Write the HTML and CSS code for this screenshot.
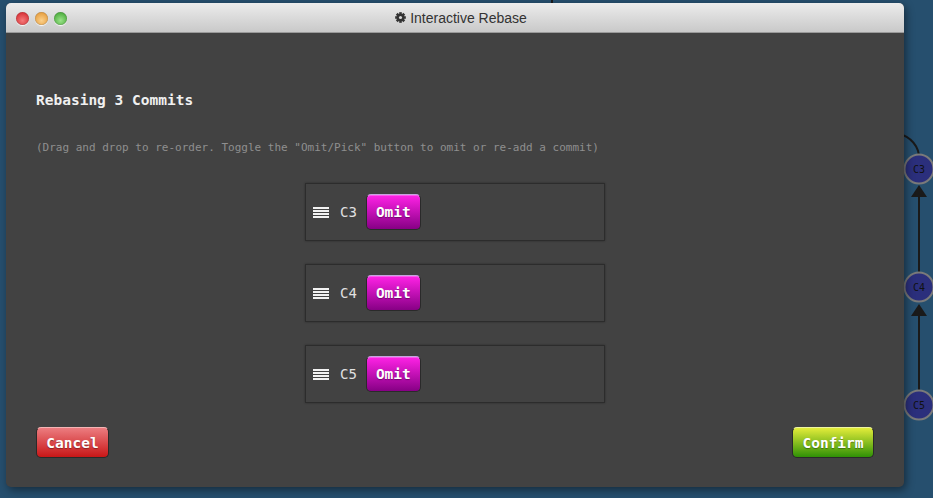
FILE: index.html
```html
<!DOCTYPE html>
<html>
<head>
<meta charset="utf-8">
<link rel="stylesheet" href="styles.css">
</head>
<body>
<svg class="graph" width="933" height="498" viewBox="0 0 933 498">
  <line x1="552" y1="0" x2="552" y2="4" stroke="#1a1a1a" stroke-width="2"/>
  <path d="M890 131 Q916 136 919 155" fill="none" stroke="#1a1a1a" stroke-width="2"/>
  <line x1="919" y1="196" x2="919" y2="273" stroke="#1a1a1a" stroke-width="2"/>
  <polygon points="919,185 911,197 927,197" fill="#1a1a1a"/>
  <line x1="919" y1="314" x2="919" y2="391" stroke="#1a1a1a" stroke-width="2"/>
  <polygon points="919,304 911,316 927,316" fill="#1a1a1a"/>
  <g class="node"><circle cx="919" cy="169" r="14.5"/><text x="919" y="173">C3</text></g>
  <g class="node"><circle cx="919" cy="287" r="14.5"/><text x="919" y="291">C4</text></g>
  <g class="node"><circle cx="919" cy="405" r="14.5"/><text x="919" y="409">C5</text></g>
</svg>
<div class="window">
  <div class="titlebar">
    <div class="lights">
      <span class="light red"></span>
      <span class="light yellow"></span>
      <span class="light green"></span>
    </div>
    <div class="title">
      <svg class="gear" width="11" height="11" viewBox="-6 -6 12 12">
        <g fill="#333">
          <circle r="4.1"/>
          <rect x="-1.4" y="-5.8" width="2.8" height="11.6"/>
          <rect x="-1.4" y="-5.8" width="2.8" height="11.6" transform="rotate(45)"/>
          <rect x="-1.4" y="-5.8" width="2.8" height="11.6" transform="rotate(90)"/>
          <rect x="-1.4" y="-5.8" width="2.8" height="11.6" transform="rotate(135)"/>
        </g>
        <circle r="1.7" fill="#d8d8d8"/>
      </svg>
      <span>Interactive Rebase</span>
    </div>
  </div>
  <div class="content">
    <h2 class="heading">Rebasing 3 Commits</h2>
    <p class="hint">(Drag and drop to re-order. Toggle the "Omit/Pick" button to omit or re-add a commit)</p>
    <ul class="commits">
      <li class="commit"><span class="grip"><i></i><i></i><i></i><i></i></span><span class="name">C3</span><button class="btn omit">Omit</button></li>
      <li class="commit"><span class="grip"><i></i><i></i><i></i><i></i></span><span class="name">C4</span><button class="btn omit">Omit</button></li>
      <li class="commit"><span class="grip"><i></i><i></i><i></i><i></i></span><span class="name">C5</span><button class="btn omit">Omit</button></li>
    </ul>
    <div class="actions">
      <button class="btn cancel">Cancel</button>
      <button class="btn confirm">Confirm</button>
    </div>
  </div>
</div>
</body>
</html>
```
FILE: styles.css
```css
html, body {
  margin: 0;
  padding: 0;
}
body {
  width: 933px;
  height: 498px;
  background: #264f6e;
  overflow: hidden;
  position: relative;
  font-family: "DejaVu Sans Mono", "Liberation Mono", monospace;
}
.graph {
  position: absolute;
  left: 0;
  top: 0;
}
.node circle {
  fill: #2b2f7c;
  stroke: #7a7a7a;
  stroke-width: 2;
}
.node text {
  font-family: "DejaVu Sans Mono", monospace;
  font-size: 10px;
  fill: #111;
  text-anchor: middle;
}
.window {
  position: relative;
  margin: 3px 0 0 6px;
  width: 898px;
  height: 484px;
  background: #424242;
  border-radius: 5px;
  box-shadow: 2px 3px 8px rgba(0, 0, 0, 0.45);
  display: flex;
  flex-direction: column;
  overflow: hidden;
}
.titlebar {
  height: 30px;
  flex: none;
  background: linear-gradient(#ececec, #c9c9c9);
  border-bottom: 1px solid #9a9a9a;
  box-sizing: border-box;
  display: flex;
  align-items: center;
  position: relative;
}
.lights {
  display: flex;
  gap: 6px;
  padding-left: 10px;
  padding-top: 2px;
}
.light {
  width: 13px;
  height: 13px;
  border-radius: 50%;
  box-shadow: 0 1px 1px rgba(255,255,255,0.9), inset 0 0 1px rgba(0,0,0,0.5);
}
.light.red { background: radial-gradient(circle at 50% 65%, #f47a7a, #d9363b 70%); }
.light.yellow { background: radial-gradient(circle at 50% 65%, #fbd08a, #e8a245 70%); }
.light.green { background: radial-gradient(circle at 50% 65%, #9be38a, #52b043 70%); }
.title {
  position: absolute;
  left: 0;
  right: 0;
  top: 0;
  bottom: 0;
  display: flex;
  align-items: center;
  justify-content: center;
  gap: 4px;
  font-family: "Liberation Sans", Arial, sans-serif;
  font-size: 14px;
  color: #333;
  padding-left: 12px;
}
.content {
  flex: 1;
  padding: 58px 30px 0 30px;
  display: flex;
  flex-direction: column;
}
.heading {
  margin: 0;
  font-size: 14.5px;
  line-height: 18px;
  font-weight: bold;
  color: #f0f0f0;
}
.hint {
  margin: 32px 0 0 0;
  font-size: 11px;
  line-height: 14px;
  color: #8f8f8f;
}
.commits {
  list-style: none;
  margin: 28px 0 0 0;
  padding: 0;
  display: flex;
  flex-direction: column;
  align-items: center;
  gap: 23px;
}
.commit {
  width: 300px;
  height: 58px;
  box-sizing: border-box;
  border: 1px solid #2c2c2c;
  box-shadow: 0 0 2px rgba(0,0,0,0.35);
  background: #424242;
  display: flex;
  align-items: center;
  padding-left: 7px;
}
.grip {
  display: flex;
  flex-direction: column;
  gap: 1px;
  width: 16px;
  margin-right: 11px;
}
.grip i {
  display: block;
  height: 2px;
  background: #f2f2f2;
}
.name {
  font-size: 14px;
  color: #e0e0e0;
  margin-right: 9px;
}
.btn {
  font-family: "DejaVu Sans Mono", "Liberation Mono", monospace;
  font-weight: bold;
  font-size: 14.5px;
  color: #fff;
  text-shadow: 0 1px 1px rgba(0,0,0,0.35);
  border-radius: 5px;
  border: 1px solid #2a2a2a;
  padding: 0;
  cursor: pointer;
}
.omit {
  width: 55px;
  height: 36px;
  background: linear-gradient(#ff22e6, #870085);
  border-top-color: #c7a3e0;
  box-shadow: inset 0 1px 0 rgba(255,255,255,0.25);
}
.actions {
  margin-top: 24px;
  display: flex;
  justify-content: space-between;
}
.cancel {
  width: 73px;
  height: 31px;
  background: linear-gradient(#ec7c80, #c81717);
  border-top-color: #f4b5b5;
}
.confirm {
  width: 82px;
  height: 31px;
  background: linear-gradient(#e3ec3a, #2f9106);
  border-top-color: #eef5a0;
}
```
